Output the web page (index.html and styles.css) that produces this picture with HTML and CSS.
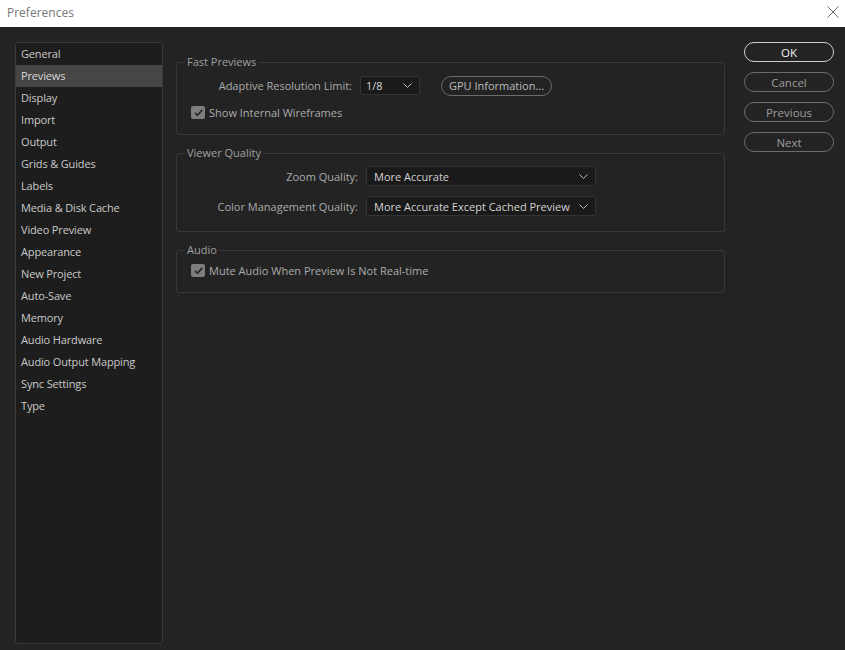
FILE: index.html
```html
<!DOCTYPE html>
<html>
<head>
<meta charset="utf-8">
<link rel="stylesheet" href="styles.css">
</head>
<body>
<div class="titlebar">
  <span class="title">Preferences</span>
  <svg class="close" width="12" height="12" viewBox="0 0 12 12"><path d="M0.5 0.5L11.5 11.5M11.5 0.5L0.5 11.5" stroke="#6a6a6a" stroke-width="1" fill="none"/></svg>
</div>
<div class="dialog">
  <ul class="sidebar">
    <li>General</li>
    <li class="sel">Previews</li>
    <li>Display</li>
    <li>Import</li>
    <li>Output</li>
    <li>Grids &amp; Guides</li>
    <li>Labels</li>
    <li>Media &amp; Disk Cache</li>
    <li>Video Preview</li>
    <li>Appearance</li>
    <li>New Project</li>
    <li>Auto-Save</li>
    <li>Memory</li>
    <li>Audio Hardware</li>
    <li>Audio Output Mapping</li>
    <li>Sync Settings</li>
    <li>Type</li>
  </ul>
  <div class="main">
    <fieldset class="group g1">
      <legend>Fast Previews</legend>
      <div class="row r-adapt">
        <span class="label lbl-adapt">Adaptive Resolution Limit:</span>
        <div class="select sel-small"><span>1/8</span><svg class="chev" width="9" height="5" viewBox="0 0 9 5"><path d="M0.5 0.5L4.5 4.5L8.5 0.5" stroke="#bdbdbd" fill="none"/></svg></div>
        <div class="pill gpu">GPU Information...</div>
      </div>
      <div class="row check-row">
        <span class="check"><svg width="13" height="13" viewBox="0 0 13 13"><path d="M3 6.8L5.5 9.3L10.3 3.8" stroke="#2a2a2a" stroke-width="1.8" fill="none"/></svg></span>
        <span class="ctext">Show Internal Wireframes</span>
      </div>
    </fieldset>
    <fieldset class="group g2">
      <legend>Viewer Quality</legend>
      <div class="row r-zoom">
        <span class="label lbl-wide">Zoom Quality:</span>
        <div class="select sel-wide"><span>More Accurate</span><svg class="chev" width="9" height="5" viewBox="0 0 9 5"><path d="M0.5 0.5L4.5 4.5L8.5 0.5" stroke="#bdbdbd" fill="none"/></svg></div>
      </div>
      <div class="row r-color">
        <span class="label lbl-wide">Color Management Quality:</span>
        <div class="select sel-wide"><span>More Accurate Except Cached Preview</span><svg class="chev" width="9" height="5" viewBox="0 0 9 5"><path d="M0.5 0.5L4.5 4.5L8.5 0.5" stroke="#bdbdbd" fill="none"/></svg></div>
      </div>
    </fieldset>
    <fieldset class="group g3">
      <legend>Audio</legend>
      <div class="row check-row">
        <span class="check"><svg width="13" height="13" viewBox="0 0 13 13"><path d="M3 6.8L5.5 9.3L10.3 3.8" stroke="#2a2a2a" stroke-width="1.8" fill="none"/></svg></span>
        <span class="ctext">Mute Audio When Preview Is Not Real-time</span>
      </div>
    </fieldset>
  </div>
  <div class="buttons">
    <div class="pill btn ok">OK</div>
    <div class="pill btn">Cancel</div>
    <div class="pill btn">Previous</div>
    <div class="pill btn">Next</div>
  </div>
</div>
</body>
</html>
```
FILE: styles.css
```css
html, body {
  margin: 0;
  padding: 0;
  width: 845px;
  height: 650px;
  overflow: hidden;
  background: #232323;
  font-family: "Open Sans", "Noto Sans", sans-serif;
  font-size: 11px;
}
.titlebar {
  height: 27px;
  background: #ffffff;
  display: flex;
  align-items: center;
  justify-content: space-between;
  padding: 0 6px 0 7px;
  box-sizing: border-box;
}
.title {
  color: #777777;
  font-size: 12px;
  margin-top: -3px;
}
.close {
  margin-top: -4px;
}
.dialog {
  display: flex;
  align-items: flex-start;
  height: 623px;
}
.sidebar {
  list-style: none;
  margin: 15px 0 0 15px;
  padding: 0;
  width: 146px;
  height: 600px;
  background: #1d1d1d;
  border: 1px solid #393939;
  border-radius: 3px;
}
.sidebar li {
  height: 22px;
  line-height: 22px;
  padding-left: 5px;
  color: #c9c9c9;
  font-size: 11px;
  letter-spacing: -0.15px;
  white-space: nowrap;
}
.sidebar li.sel {
  background: #464646;
  color: #d6d6d6;
}
.main {
  width: 549px;
  margin: 27px 0 0 13px;
  display: flex;
  flex-direction: column;
  gap: 10px;
}
.group {
  margin: 0;
  border: 1px solid #383838;
  border-radius: 3px;
  padding: 0;
  box-sizing: border-box;
}
.group legend {
  color: #a0a0a0;
  font-size: 11px;
  margin-left: 8px;
  padding: 0 2px;
  line-height: 16px;
}
.g1 { height: 81px; }
.g2 { height: 87px; }
.g3 { height: 51px; }
.row {
  display: flex;
  align-items: center;
}
.label {
  color: #ababab;
  text-align: right;
  white-space: nowrap;
}
.r-adapt {
  margin-top: 6px;
  height: 19px;
}
.lbl-adapt {
  width: 175px;
  margin-right: 8px;
}
.select {
  box-sizing: border-box;
  background: #1a1a1a;
  border: 1px solid #333333;
  border-radius: 2px;
  height: 19px;
  display: flex;
  align-items: center;
  justify-content: space-between;
  padding: 0 7px 0 6px;
  color: #d2d2d2;
}
.sel-small {
  width: 60px;
  padding-left: 5px;
}
.sel-wide {
  width: 230px;
  height: 20px;
  padding-left: 7px;
}
.pill {
  box-sizing: border-box;
  border: 1px solid #6c6c6c;
  border-radius: 10px;
  display: flex;
  align-items: center;
  justify-content: center;
  color: #b5b5b5;
}
.gpu {
  margin-left: 21px;
  width: 111px;
  height: 20px;
  color: #bdbdbd;
}
.check-row {
  margin-top: 10px;
  padding-left: 14px;
}
.check {
  width: 14px;
  height: 13px;
  background: #7e7e7e;
  border-radius: 2px;
  display: flex;
  align-items: center;
  justify-content: center;
  margin-right: 4px;
}
.ctext {
  color: #ababab;
  white-space: nowrap;
}
.g3 .check-row {
  margin-top: 5px;
}
.r-zoom {
  margin-top: 5px;
}
.r-color {
  margin-top: 10px;
}
.lbl-wide {
  width: 181px;
  margin-right: 8px;
}
.buttons {
  margin: 15px 0 0 19px;
  display: flex;
  flex-direction: column;
  gap: 10px;
}
.btn {
  width: 90px;
  height: 20px;
  color: #9e9e9e;
  font-size: 11.5px;
}
.btn.ok {
  border-color: #cfcfcf;
  color: #f2f2f2;
}
```
